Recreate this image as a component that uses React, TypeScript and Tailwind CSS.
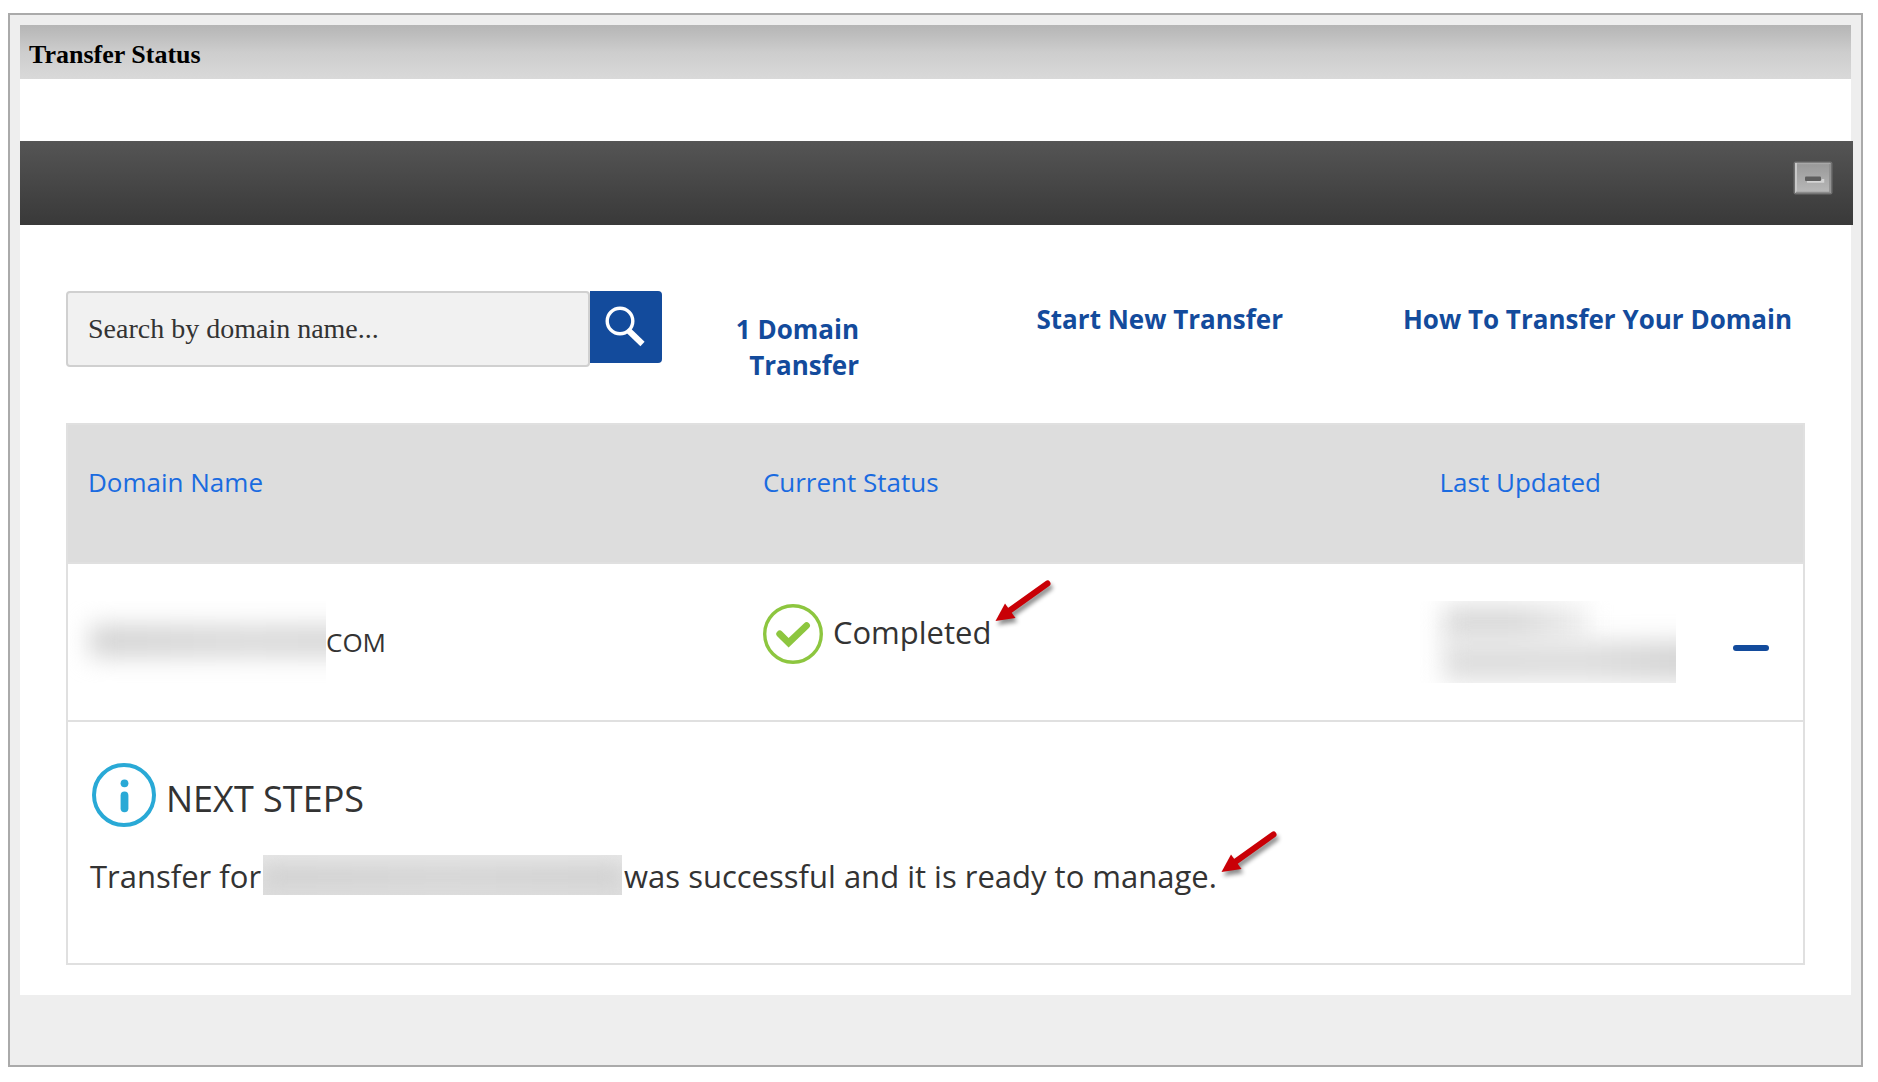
import React from 'react';

const SearchIcon: React.FC = () => (
  <svg viewBox="0 0 72 72" className="h-full w-full" fill="none" aria-hidden="true">
    <ellipse cx="30" cy="30" rx="12.8" ry="12.8" stroke="#fff" strokeWidth="3.4" />
    <path d="M38.5 39.5L52.5 53" stroke="#fff" strokeWidth="6" />
  </svg>
);

const CheckIcon: React.FC = () => (
  <svg viewBox="0 0 60 60" className="size-[60px] shrink-0" fill="none" aria-hidden="true">
    <circle cx="30" cy="30" r="28.3" stroke="#8dc63f" strokeWidth="3.4" />
    <path
      d="M14.2 32.2a3.4 3.4 0 0 1 .2-4.8a3.4 3.4 0 0 1 4.7.2L25.6 34L41.2 19.2a3.4 3.4 0 0 1 4.8.1a3.4 3.4 0 0 1-.1 4.8L25.6 43.6Z"
      fill="#8dc63f"
    />
  </svg>
);

const InfoIcon: React.FC = () => (
  <svg viewBox="0 0 64 64" className="size-16 shrink-0" fill="none" aria-hidden="true">
    <circle cx="32" cy="32" r="30" stroke="#29a9d6" strokeWidth="4" />
    <circle cx="32.5" cy="20.3" r="3.9" fill="#29a9d6" />
    <rect x="28.6" y="28.6" width="7.8" height="20.6" rx="3.9" fill="#29a9d6" />
  </svg>
);

const Arrow: React.FC = () => (
  <svg
    viewBox="0 0 64 52"
    className="pointer-events-none absolute -top-[27px] left-full ml-0.5 h-[52px] w-16 drop-shadow-[2px_4px_2px_rgba(0,0,0,0.45)]"
    fill="none"
    aria-hidden="true"
  >
    <path d="M54.5 6.5L16 34" stroke="#c90006" strokeWidth="6" strokeLinecap="round" />
    <path d="M2.5 44L12 26.5L22.5 41Z" fill="#c90006" />
  </svg>
);

const CollapseIcon: React.FC = () => (
  <svg viewBox="0 0 40 34" className="h-[34px] w-10" fill="none" aria-hidden="true">
    <defs>
      <linearGradient id="collapse-face" x1="0" y1="0" x2="0" y2="1">
        <stop offset="0" stopColor="#989898" />
        <stop offset="1" stopColor="#b9b9b9" />
      </linearGradient>
    </defs>
    <rect x="0.5" y="0.5" width="39" height="33" rx="2" fill="#6f6f6f" />
    <rect x="2" y="2" width="36" height="30" fill="url(#collapse-face)" />
    <path d="M2 2.5H37" stroke="#a8a8a8" strokeWidth="1.5" />
    <path d="M3 2V31" stroke="#c8c8c8" strokeWidth="2" />
    <path d="M37 3V31.5H3" stroke="#8c8c8c" strokeWidth="1.5" />
    <path d="M14 20.5H30V18" stroke="#d4d4d4" strokeWidth="2.5" />
    <rect x="12" y="15.5" width="16" height="4.5" rx="1" fill="#5e5e5e" />
  </svg>
);

const App: React.FC = () => {
  return (
    <main className="min-h-screen bg-white px-2 pt-[13px] pr-[15px] font-['Open_Sans',sans-serif] text-[#333]">
      <div className="border-2 border-[#aaa] bg-[#eee] p-2.5 pb-[70px]">
        <div className="bg-white">
          <header className="flex h-[54px] items-center bg-linear-to-b from-[#b5b5b5] via-[#cdcdcd] to-[#d9d9d9] px-[9px] pt-1.5">
            <h1 className="font-['Liberation_Serif',serif] text-[26px] leading-9 font-bold text-black">
              Transfer Status
            </h1>
          </header>

          <div className="mt-[62px] -mr-0.5 flex h-[84px] items-start justify-end bg-linear-to-b from-[#555] to-[#393939] px-5 pt-5">
            <button type="button" aria-label="Collapse">
              <CollapseIcon />
            </button>
          </div>

          <section className="px-[46px] pt-[66px] pb-[30px]">
            <div className="grid grid-cols-[596fr_197fr_424fr_522fr] items-start text-[26px] leading-9 font-bold text-[#134b9c]">
              <form className="flex items-start" onSubmit={(e) => e.preventDefault()}>
                <input
                  type="text"
                  aria-label="Search by domain name"
                  placeholder="Search by domain name..."
                  className="h-[76px] min-w-0 flex-1 rounded border-2 border-[#d0d0d0] bg-[#f1f1f1] px-5 font-['Liberation_Serif',serif] text-[28px] font-normal text-[#333] placeholder:text-[#333]"
                />
                <button type="submit" aria-label="Search" className="size-[72px] rounded-r bg-[#134b9c]">
                  <SearchIcon />
                </button>
              </form>
              <a href="#transfers" className="pt-5 text-right">
                1 Domain
                <br />
                Transfer
              </a>
              <a href="#new" className="pt-2.5 text-right">
                Start New Transfer
              </a>
              <a href="#how" className="pt-2.5 pr-[13px] text-right">
                How To Transfer Your Domain
              </a>
            </div>

            <div className="mt-10 border-2 border-[#e0e0e0]">
              <table className="w-full table-fixed border-collapse text-left text-[26px] leading-9">
                <colgroup>
                  <col className="w-[38.9%]" />
                  <col className="w-[39%]" />
                  <col className="w-[16.9%]" />
                  <col />
                </colgroup>
                <thead>
                  <tr className="h-[138px] border-b-2 border-[#e0e0e0] bg-[#ddd] align-top text-[#1a6be0]">
                    <th className="px-5 pt-[39px] font-normal">Domain Name</th>
                    <th className="px-5 pt-[39px] font-normal">Current Status</th>
                    <th className="px-5 pt-[39px] font-normal">Last Updated</th>
                    <td />
                  </tr>
                </thead>
                <tbody>
                  <tr className="h-[158px] border-b-2 border-[#e0e0e0]">
                    <td className="pl-0.5 align-middle">
                      <div className="flex items-center">
                        <div className="h-[82px] w-64 overflow-hidden pt-6 pl-5">
                          <div className="h-8 w-80 bg-linear-to-r from-[#d2d2d2] via-[#d9d9d9] to-[#d4d4d4] blur-[12px]" />
                        </div>
                        COM
                      </div>
                    </td>
                    <td className="px-5 pt-10 align-top">
                      <div className="flex items-start gap-2.5 text-[31px] leading-[56px]">
                        <CheckIcon />
                        <span className="relative">
                          Completed
                          <Arrow />
                        </span>
                      </div>
                    </td>
                    <td className="align-middle">
                      <div className="flex h-[82px] w-64 flex-col overflow-hidden pt-1 pl-6">
                        <div className="h-9 w-36 shrink-0 bg-linear-to-r from-[#dadada] via-[#dadada] to-[#f0f0f0] blur-[12px]" />
                        <div className="h-10 w-72 shrink-0 bg-linear-to-r from-[#dddddd] via-[#dedede] to-[#cfcfcf] blur-[12px]" />
                      </div>
                    </td>
                    <td className="px-5 pt-[81px] align-top">
                      <button
                        type="button"
                        aria-label="Hide details"
                        className="block h-1.5 w-9 rounded-full bg-[#134b9c]"
                      />
                    </td>
                  </tr>
                  <tr className="h-[242px] align-top">
                    <td colSpan={4} className="px-[22px] pt-[41px]">
                      <div className="flex items-end gap-2.5 pl-0.5">
                        <InfoIcon />
                        <h2 className="text-[36px] leading-[56px]">NEXT STEPS</h2>
                      </div>
                      <p className="mt-7 flex gap-0.5 text-[31px] leading-[42px]">
                        <span>Transfer for</span>
                        <span className="h-10 w-[359px] overflow-hidden bg-linear-to-b from-[#e6e6e6] to-[#dedede] py-3">
                          <span className="block h-5 bg-linear-to-r from-[#cfcfcf] via-[#d4d4d4] to-[#cfcfcf] blur-[10px]" />
                        </span>
                        <span className="relative">
                          was successful and it is ready to manage.
                          <Arrow />
                        </span>
                      </p>
                    </td>
                  </tr>
                </tbody>
              </table>
            </div>
          </section>
        </div>
      </div>
    </main>
  );
};

export default App;
